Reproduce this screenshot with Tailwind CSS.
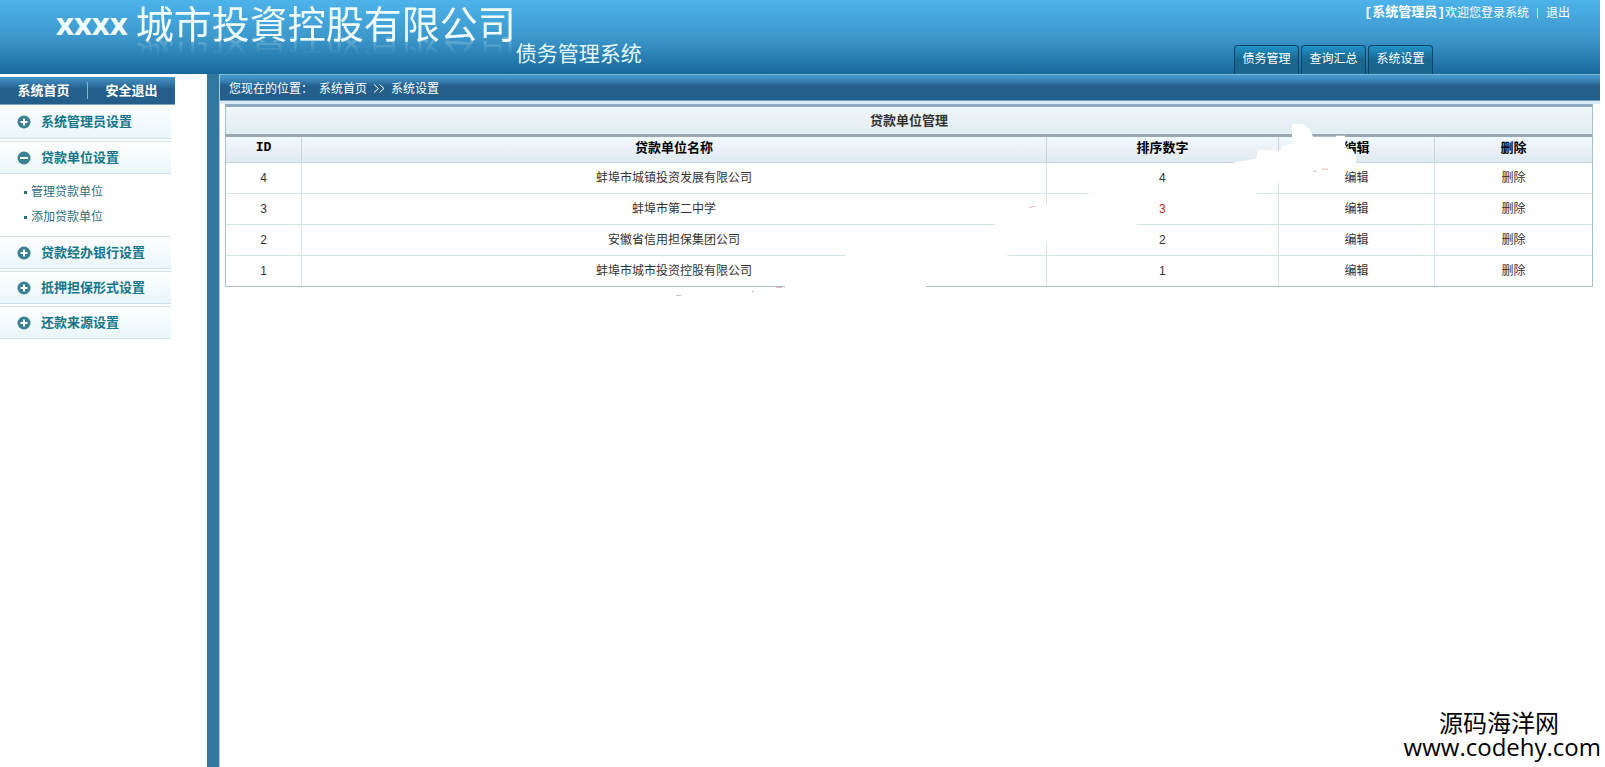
<!DOCTYPE html>
<html lang="zh-CN">
<head>
    <meta charset="UTF-8">
    <meta name="viewport" content="width=device-width, initial-scale=1.0">
    <title>债务管理系统</title>
    <script src="https://cdn.jsdelivr.net/npm/@tailwindcss/browser@4"></script>
</head>
<body class="relative flex min-h-screen flex-col overflow-x-hidden bg-white pr-[5px] font-['Liberation_Sans','Noto_Sans_CJK_SC',sans-serif] text-xs text-[#333]">

    <!-- Header -->
    <header class="flex h-[74px] shrink-0 justify-between bg-linear-to-b from-[#4db3ea] via-[#3d98cc] to-[#17699b] text-white">
        <div class="flex pl-14">
            <h1 class="flex items-start gap-2 whitespace-nowrap text-[#f0fdff]">
                <span class="font-['Open_Sans',sans-serif] text-[31px] leading-[46px] font-bold">xxxx</span>
                <span class="font-['Noto_Sans_CJK_TC',sans-serif] text-[38px] leading-[44px] font-normal [-webkit-box-reflect:below_-9px_linear-gradient(transparent_55%,rgb(255_255_255/0.3))]">城市投資控股有限公司</span>
            </h1>
            <p class="mt-10 whitespace-nowrap text-[21px] leading-7 text-[#e2f8ff]">债务管理系统</p>
        </div>
        <div class="flex flex-col items-end justify-between">
            <div class="mt-1 mr-[30px] flex whitespace-nowrap leading-[18px]">
                <b class="font-['Liberation_Mono','Noto_Sans_CJK_SC',monospace] text-[13px]">[系统管理员]</b>
                <span>欢迎您登录系统</span>
                <span class="mx-2 my-1 w-px bg-white/80"></span>
                <a href="#">退出</a>
            </div>
            <nav class="mr-[167px] flex gap-[2px] leading-[26px]">
                <a href="#" class="w-[65px] rounded-t-[4px] border border-b-0 border-[#0d4568] bg-linear-to-b from-[#2193c9] to-[#1a668f] to-50% pb-[2px] text-center">债务管理</a>
                <a href="#" class="w-[65px] rounded-t-[4px] border border-b-0 border-[#0d4568] bg-linear-to-b from-[#2193c9] to-[#1a668f] to-50% pb-[2px] text-center">查询汇总</a>
                <a href="#" class="w-[65px] rounded-t-[4px] border border-b-0 border-[#0d4568] bg-linear-to-b from-[#2193c9] to-[#1a668f] to-50% pb-[2px] text-center">系统设置</a>
            </nav>
        </div>
    </header>

    <div class="flex grow">
        <!-- Sidebar -->
        <aside class="w-[207px] shrink-0 pt-[3px] text-[13px] font-bold text-[#14768a]">
            <div class="flex h-7 w-[175px] items-center border-b border-[#7fa3bb] bg-linear-to-b from-[#4595c8] via-[#245f8c] via-45% to-[#245f8c] text-white">
                <a href="#" class="w-[88px] border-r border-[#7fb6d8] text-center">系统首页</a>
                <a href="#" class="grow text-center">安全退出</a>
            </div>
            <nav class="flex w-[171px] flex-col gap-[2px]">
                <button type="button" class="flex h-[34px] items-center gap-[10px] border-b border-[#cfe3ea] bg-linear-to-b from-white to-[#e9f6f9] pt-px pl-[17px]">
                    <svg class="size-[14px]" viewBox="0 0 14 14"><circle cx="7" cy="7" r="6.5" fill="#3b8195"/><path d="M7 3.5v7M3.5 7h7" stroke="#fff" stroke-width="2"/></svg>
                    系统管理员设置
                </button>
                <button type="button" class="flex h-[33px] items-center gap-[10px] border-y border-[#cfe3ea] bg-linear-to-b from-white to-[#e9f6f9] pl-[17px]">
                    <svg class="size-[14px]" viewBox="0 0 14 14"><circle cx="7" cy="7" r="6.5" fill="#3b8195"/><path d="M3 7h8" stroke="#fff" stroke-width="2"/></svg>
                    贷款单位设置
                </button>
                <ul class="h-[58px] pt-1 pl-6 text-xs leading-[25px] font-normal text-[#2c6e7c]">
                    <li class="flex items-center gap-1"><span class="size-[3px] bg-[#2c6e7c]"></span><a href="#">管理贷款单位</a></li>
                    <li class="flex items-center gap-1"><span class="size-[3px] bg-[#2c6e7c]"></span><a href="#">添加贷款单位</a></li>
                </ul>
                <button type="button" class="flex h-[33px] items-center gap-[10px] border-y border-[#cfe3ea] bg-linear-to-b from-white to-[#e9f6f9] pl-[17px]">
                    <svg class="size-[14px]" viewBox="0 0 14 14"><circle cx="7" cy="7" r="6.5" fill="#3b8195"/><path d="M7 3.5v7M3.5 7h7" stroke="#fff" stroke-width="2"/></svg>
                    贷款经办银行设置
                </button>
                <button type="button" class="flex h-[33px] items-center gap-[10px] border-y border-[#cfe3ea] bg-linear-to-b from-white to-[#e9f6f9] pl-[17px]">
                    <svg class="size-[14px]" viewBox="0 0 14 14"><circle cx="7" cy="7" r="6.5" fill="#3b8195"/><path d="M7 3.5v7M3.5 7h7" stroke="#fff" stroke-width="2"/></svg>
                    抵押担保形式设置
                </button>
                <button type="button" class="flex h-[33px] items-center gap-[10px] border-y border-[#cfe3ea] bg-linear-to-b from-white to-[#e9f6f9] pl-[17px]">
                    <svg class="size-[14px]" viewBox="0 0 14 14"><circle cx="7" cy="7" r="6.5" fill="#3b8195"/><path d="M7 3.5v7M3.5 7h7" stroke="#fff" stroke-width="2"/></svg>
                    还款来源设置
                </button>
            </nav>
        </aside>

        <div class="w-[13px] shrink-0 border-r border-[#a9cbdc] bg-[#31789f]"></div>

        <!-- Content -->
        <main class="min-w-0 grow">
            <div class="flex h-[27px] items-center gap-[6px] border-t border-b border-t-[#7db9dc] border-b-[#6f9ebb] bg-linear-to-b from-[#4595c8] from-10% via-[#245f8c] via-45% to-[#245f8c] pt-[2px] pl-[9px] text-white">
                <span>您现在的位置：</span>
                <a href="#">系统首页</a>
                <svg class="h-[9px] w-3" viewBox="0 0 12 9" fill="none" stroke="#fff"><path d="M1 .5l4.500 4-4.500 4M6.500 .5l4.500 4-4.500 4"/></svg>
                <a href="#">系统设置</a>
            </div>
            <div class="h-[3px] bg-[#dcebf5]"></div>

            <div class="relative mr-[7px] ml-[5px]">
                <table class="w-full table-fixed border-separate border-spacing-0 border border-t-0 border-[#a5bfcb] text-center">
                    <caption class="h-[33px] border-x border-t-[3px] border-b-[3px] border-x-[#a5bfcb] border-t-[#8ea9c0] border-b-[#9aa9b1] bg-linear-to-b from-[#f1f6fb] to-[#e0eef1] text-[13px] leading-[27px] font-bold">贷款单位管理</caption>
                    <colgroup>
                        <col class="w-[76px]">
                        <col>
                        <col class="w-[17%]">
                        <col class="w-[156px]">
                        <col class="w-[157px]">
                    </colgroup>
                    <thead class="bg-linear-to-b from-[#f0fafd] via-[#ebf0f6] to-[#dde9f1] text-[13px] text-black">
                        <tr class="h-[26px]">
                            <th class="border-r border-b border-[#c4d6de] pb-1 font-['Liberation_Mono',monospace]">ID</th>
                            <th class="border-r border-b border-[#c4d6de] pb-1">贷款单位名称</th>
                            <th class="border-r border-b border-[#c4d6de] pb-1">排序数字</th>
                            <th class="border-r border-b border-[#c4d6de] pb-1">编辑</th>
                            <th class="border-b border-[#c4d6de] pb-1">删除</th>
                        </tr>
                    </thead>
                    <tbody>
                        <tr class="h-[31px]">
                            <td class="border-r border-b border-[#d2e5ea]">4</td>
                            <td class="border-r border-b border-[#d2e5ea]">蚌埠市城镇投资发展有限公司</td>
                            <td class="border-r border-b border-[#d2e5ea]">4</td>
                            <td class="border-r border-b border-[#d2e5ea]"><a href="#">编辑</a></td>
                            <td class="border-b border-[#d2e5ea]"><a href="#">删除</a></td>
                        </tr>
                        <tr class="h-[31px]">
                            <td class="border-r border-b border-[#d2e5ea]">3</td>
                            <td class="border-r border-b border-[#d2e5ea]">蚌埠市第二中学</td>
                            <td class="border-r border-b border-[#d2e5ea] text-[#b8281c]">3</td>
                            <td class="border-r border-b border-[#d2e5ea]"><a href="#">编辑</a></td>
                            <td class="border-b border-[#d2e5ea]"><a href="#">删除</a></td>
                        </tr>
                        <tr class="h-[31px]">
                            <td class="border-r border-b border-[#d2e5ea]">2</td>
                            <td class="border-r border-b border-[#d2e5ea]">安徽省信用担保集团公司</td>
                            <td class="border-r border-b border-[#d2e5ea]">2</td>
                            <td class="border-r border-b border-[#d2e5ea]"><a href="#">编辑</a></td>
                            <td class="border-b border-[#d2e5ea]"><a href="#">删除</a></td>
                        </tr>
                        <tr class="h-[30px]">
                            <td class="border-r border-[#d2e5ea]">1</td>
                            <td class="border-r border-[#d2e5ea]">蚌埠市城市投资控股有限公司</td>
                            <td class="border-r border-[#d2e5ea]">1</td>
                            <td class="border-r border-[#d2e5ea]"><a href="#">编辑</a></td>
                            <td><a href="#">删除</a></td>
                        </tr>
                    </tbody>
                </table>
                <!-- white brush mark across the table -->
                <svg class="pointer-events-none absolute inset-0 size-full overflow-visible" viewBox="225 104 1368 184" preserveAspectRatio="none" aria-hidden="true">
                    <path fill="#fff" d="M785 290V284L846 256L993 226L1047 204L1089 194L1163 186L1237 162L1256 159L1258 150L1280 151L1283 146L1292 144V124H1303L1310 130L1313 137H1336V136H1345V144L1347 149H1352L1356 156V164L1328 170L1280 183L1254 195L1180 198H1152L1138 225L1047 244L1008 256L926 286V290Z"/>
                    <path stroke="#e2b5b0" d="M1029 208.500l6-2M1344 147.500h5M1313 171.500h4M1322 169.500h6M776 288.500h6M676 296.500h5M752 292.500h2"/>
                </svg>
            </div>
        </main>
    </div>

    <!-- Watermark -->
    <div class="absolute right-[4px] bottom-2 flex flex-col items-end text-black">
        <span class="mr-[42px] text-2xl leading-[22px]">源码海洋网</span>
        <span class="font-['Open_Sans',sans-serif] text-2xl leading-6 font-medium">www.codehy.com</span>
    </div>
</body>
</html>
